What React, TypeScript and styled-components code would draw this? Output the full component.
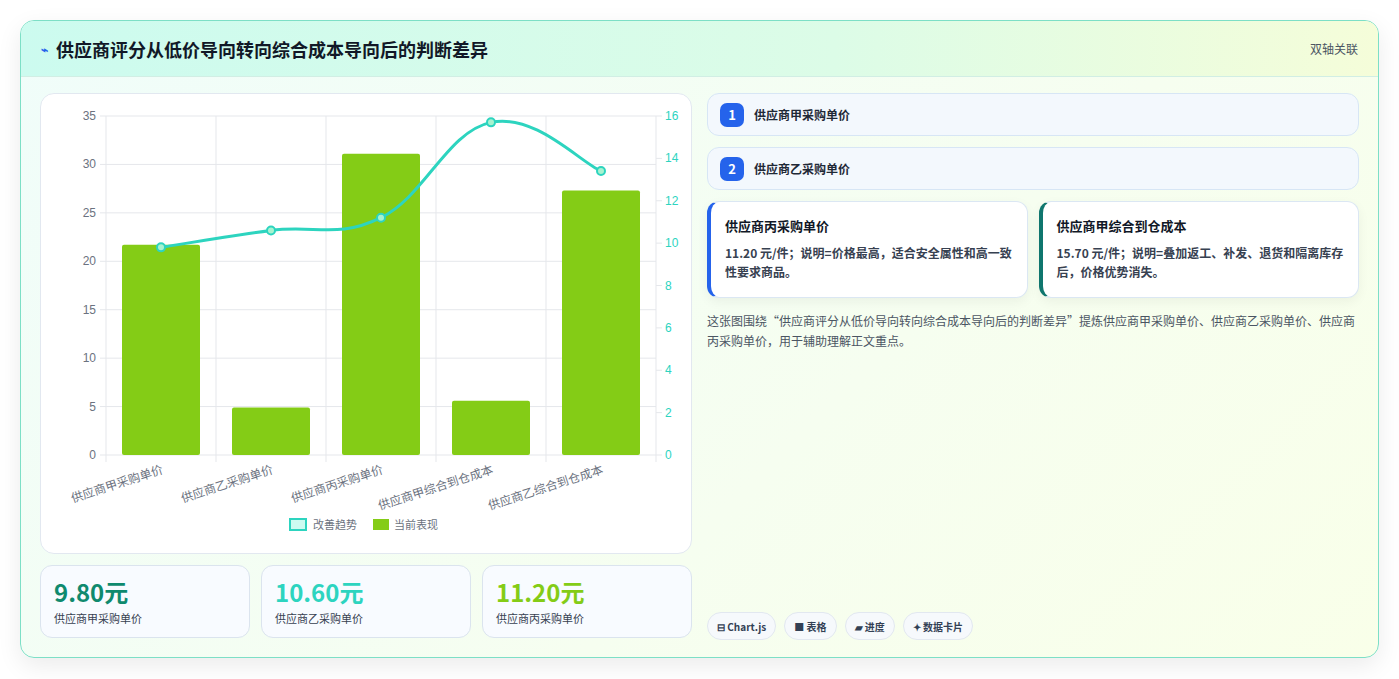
import React from "react";
import styled, { createGlobalStyle } from "styled-components";

const G = createGlobalStyle`
  body{margin:0;background:#f3f4f6;font-family:"Noto Sans CJK SC","Noto Sans",sans-serif;}
`;
const Page = styled.div`padding:20px 20px 21px 20px;height:679px;box-sizing:border-box;background:#fff;`;
const Card = styled.div`height:638px;box-sizing:border-box;border:1px solid #7ddfc6;border-radius:14px;overflow:hidden;
  background:linear-gradient(135deg,#f0fdfa 0%,#f6fef0 60%,#f9ffe9 100%);box-shadow:0 8px 24px rgba(0,0,0,.08);display:flex;flex-direction:column;`;
const Header = styled.div`height:55px;flex:none;display:flex;align-items:center;justify-content:space-between;padding:0 20px;
  background:linear-gradient(90deg,#ccfbef 0%,#dcfce7 60%,#f5fdd9 100%);border-bottom:1px solid #d1eee4;`;
const Title = styled.h1`margin:0;font-size:18px;font-weight:700;color:#111827;display:flex;align-items:center;gap:8px;`;
const Tag = styled.span`font-size:12px;color:#4b5563;`;
const Body = styled.div`flex:1;display:grid;grid-template-columns:652px 652px;gap:15px;padding:16px 19px 18px 19px;`;
const Col = styled.div`display:flex;flex-direction:column;gap:11px;`;
const Panel = styled.div`height:461px;background:#fff;border:1px solid #e2e8f0;border-radius:14px;box-sizing:border-box;`;
const Stats = styled.div`display:grid;grid-template-columns:repeat(3,1fr);gap:11px;`;
const Stat = styled.div`height:73px;box-sizing:border-box;border:1px solid #dbe4ee;border-radius:12px;background:#f8fbff;padding:10px 13px;`;
const StatV = styled.div<{c:string}>`font-size:24px;font-weight:700;color:${p=>p.c};line-height:32px;`;
const StatL = styled.div`font-size:11px;color:#374151;margin-top:2px;`;
const Pill = styled.div`height:43px;box-sizing:border-box;border:1px solid #d7e6f5;border-radius:12px;background:#f3f8fd;display:flex;align-items:center;gap:10px;padding:0 12px;font-size:12px;font-weight:700;color:#1f2937;`;
const Num = styled.span`width:24px;height:24px;border-radius:7px;background:#2563eb;color:#fff;display:flex;align-items:center;justify-content:center;font-size:13px;font-weight:700;`;
const Duo = styled.div`display:grid;grid-template-columns:1fr 1fr;gap:11px;`;
const Info = styled.div<{c:string}>`height:97px;box-sizing:border-box;background:#fff;border:1px solid #dbe7f3;border-left:4px solid ${p=>p.c};border-radius:12px;padding:14px 14px;box-shadow:0 4px 12px rgba(0,0,0,.05);`;
const InfoT = styled.div`font-size:13px;font-weight:700;color:#111827;margin-bottom:8px;`;
const InfoD = styled.div`font-size:12px;font-weight:700;color:#374151;line-height:19px;`;
const Para = styled.p`margin:2px 0 0;font-size:12px;color:#4b5563;line-height:20px;`;
const Spacer = styled.div`flex:1;`;
const Chips = styled.div`display:flex;gap:8px;margin-bottom:-1px;`;
const Chip = styled.span`height:28px;box-sizing:border-box;padding:0 9px;border:1px solid #e2e8f0;border-radius:14px;background:#f6f9fc;font-size:10px;font-weight:700;color:#334155;display:flex;align-items:center;gap:3px;`;

const bars=[21.7,4.9,31.1,5.6,27.3];
const line=[9.8,10.6,11.2,15.7,13.4];
const cats=["供应商甲采购单价","供应商乙采购单价","供应商丙采购单价","供应商甲综合到仓成本","供应商乙综合到仓成本"];
const L=65,R=615,T=22,B=361;
const cx=(i:number)=>L+55+i*110;
const pts=line.map((v,i)=>[cx(i),B-(B-T)*v/16]);
function smooth(p:number[][]){let d=`M${p[0][0]},${p[0][1]}`;for(let i=0;i<p.length-1;i++){const p0=p[i-1]||p[i],p1=p[i],p2=p[i+1],p3=p[i+2]||p2;const t=0.2;
  d+=` C${p1[0]+(p2[0]-p0[0])*t},${p1[1]+(p2[1]-p0[1])*t} ${p2[0]-(p3[0]-p1[0])*t},${p2[1]-(p3[1]-p1[1])*t} ${p2[0]},${p2[1]}`;}return d;}

function Chart(){
  const f="Liberation Sans, sans-serif";
  return <svg width="650" height="459" style={{display:"block"}}>
    {[0,5,10,15,20,25,30,35].map(v=>{const y=B-(B-T)*v/35;return <g key={v}><line x1={L-6} x2={R} y1={y} y2={y} stroke="#e5e7eb"/><text x={L-10} y={y+4} fontSize="12" fill="#6b7280" textAnchor="end" fontFamily={f}>{v}</text></g>})}
    {[0,2,4,6,8,10,12,14,16].map(v=>{const y=B-(B-T)*v/16;return <g key={v}><line x1={R} x2={R+6} y1={y} y2={y} stroke="#e5e7eb"/><text x={R+9} y={y+4} fontSize="12" fill="#2dd4bf" fontFamily={f}>{v}</text></g>})}
    {[0,1,2,3,4,5].map(i=><line key={i} x1={L+i*110} x2={L+i*110} y1={T} y2={B+7} stroke="#e5e7eb"/>)}
    {bars.map((v,i)=>{const y=B-(B-T)*v/35;return <rect key={i} x={cx(i)-39} y={y} width="78" height={B-y} fill="#84cc16" rx="2"/>})}
    <path d={smooth(pts)} fill="none" stroke="#2dd4bf" strokeWidth="3"/>
    {pts.map((p,i)=><circle key={i} cx={p[0]} cy={p[1]} r="4" fill="#a7f3d0" stroke="#2dd4bf" strokeWidth="2"/>)}
    {cats.map((c,i)=><text key={i} transform={`translate(${cx(i)+3},${B+18}) rotate(-18)`} fontSize="12" fill="#6b7280" textAnchor="end" fontFamily="Noto Sans CJK SC, sans-serif">{c}</text>)}
    <rect x="249" y="425" width="16" height="11" fill="#ccfbf1" stroke="#2dd4bf" strokeWidth="2"/>
    <text x="272" y="435" fontSize="11" fill="#6b7280" fontFamily="Noto Sans CJK SC, sans-serif">改善趋势</text>
    <rect x="332" y="425" width="16" height="11" fill="#84cc16"/>
    <text x="353" y="435" fontSize="11" fill="#6b7280" fontFamily="Noto Sans CJK SC, sans-serif">当前表现</text>
  </svg>;
}

export default function App(){
  return <><G/><Page><Card>
    <Header><Title><span style={{fontSize:12,color:"#2563eb"}}>⌁</span>供应商评分从低价导向转向综合成本导向后的判断差异</Title><Tag>双轴关联</Tag></Header>
    <Body>
      <Col>
        <Panel><Chart/></Panel>
        <Stats>
          <Stat><StatV c="#0f8a6e">9.80元</StatV><StatL>供应商甲采购单价</StatL></Stat>
          <Stat><StatV c="#2dd4bf">10.60元</StatV><StatL>供应商乙采购单价</StatL></Stat>
          <Stat><StatV c="#84cc16">11.20元</StatV><StatL>供应商丙采购单价</StatL></Stat>
        </Stats>
      </Col>
      <Col>
        <Pill><Num>1</Num>供应商甲采购单价</Pill>
        <Pill><Num>2</Num>供应商乙采购单价</Pill>
        <Duo>
          <Info c="#2563eb"><InfoT>供应商丙采购单价</InfoT><InfoD>11.20 元/件；说明=价格最高，适合安全属性和高一致性要求商品。</InfoD></Info>
          <Info c="#0f766e"><InfoT>供应商甲综合到仓成本</InfoT><InfoD>15.70 元/件；说明=叠加返工、补发、退货和隔离库存后，价格优势消失。</InfoD></Info>
        </Duo>
        <Para>这张图围绕“供应商评分从低价导向转向综合成本导向后的判断差异”提炼供应商甲采购单价、供应商乙采购单价、供应商丙采购单价，用于辅助理解正文重点。</Para>
        <Spacer/>
        <Chips><Chip>⊟ Chart.js</Chip><Chip>■ 表格</Chip><Chip>▰ 进度</Chip><Chip>✦ 数据卡片</Chip></Chips>
      </Col>
    </Body>
  </Card></Page></>;
}
